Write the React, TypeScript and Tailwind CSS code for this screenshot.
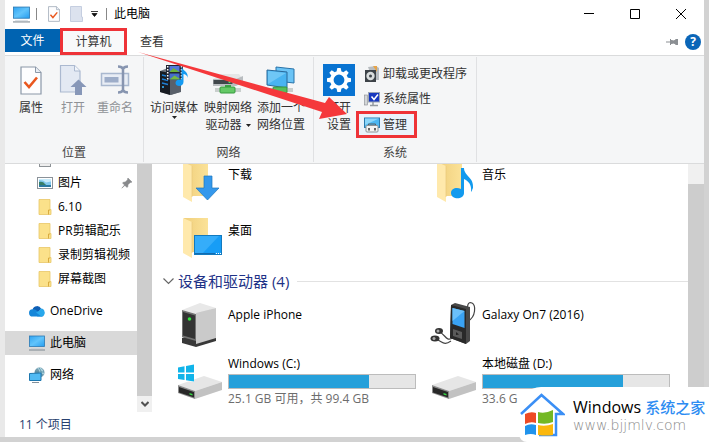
import type { ReactNode } from "react"

const pageFont = "font-['Open_Sans','Noto_Sans_CJK_SC',sans-serif]"

function MonitorIcon({ className = "w-4 h-4" }: { className?: string }) {
  return (
    <svg viewBox="0 0 16 16" className={className} aria-hidden="true">
      <defs>
        <linearGradient id="screen" x1="0" y1="0" x2="1" y2="1">
          <stop offset="0" stopColor="#2ea3f2" />
          <stop offset="0.5" stopColor="#62c4fb" />
          <stop offset="1" stopColor="#259df0" />
        </linearGradient>
      </defs>
      <rect x="0.5" y="1" width="15" height="10.5" fill="url(#screen)" stroke="#2b79b4" strokeWidth="0.8" />
      <path d="M0 15h16" stroke="#7c8790" strokeWidth="1" />
      <path d="M2 13.6h12" stroke="#c3cdd5" strokeWidth="0.6" />
    </svg>
  )
}

function CheckDocIcon({ className }: { className: string }) {
  return (
    <svg viewBox="0 0 22 29" className={className} aria-hidden="true">
      <path d="M1 1h14.5L21 6.5V28H1z" fill="#fdfdfe" stroke="#8b98a8" strokeWidth="1.2" />
      <path d="M15.5 1v5.5H21" fill="#e9eef5" stroke="#8b98a8" strokeWidth="1" />
      <path d="M4.500 16l4.500 5 8-9.500" fill="none" stroke="#e9571f" strokeWidth="2.6" />
    </svg>
  )
}

function OpenIcon() {
  return (
    <svg viewBox="0 0 28 32" className="w-7 h-8" aria-hidden="true">
      <path d="M1.500 1.500h14L21 7v21H1.500z" fill="#e3e9f3" stroke="#abb9d0" strokeWidth="1.2" />
      <path d="M15.500 1.500V7H21" fill="#f2f5fa" stroke="#abb9d0" />
      <path d="M19.500 15.500l8 7.500h-4.500v8h-7v-8h-4.500z" fill="#8797b8" />
    </svg>
  )
}

function RenameIcon() {
  return (
    <svg viewBox="0 0 30 32" className="w-[30px] h-8" aria-hidden="true">
      <rect x="1.5" y="9.5" width="27" height="12" fill="#e8edf5" stroke="#a9b8cf" strokeWidth="1.5" />
      <rect x="4.5" y="13" width="14" height="5.5" fill="#9dadc9" />
      <path d="M18 2.500q4 0 5 2.500q1-2.500 5-2.500M23 4.500v22M18 28.500q4 0 5-2.500q1 2.500 5 2.500" fill="none" stroke="#8795b0" strokeWidth="2.5" />
    </svg>
  )
}

function MediaServerIcon() {
  return (
    <svg viewBox="0 0 32 32" className="w-8 h-8" aria-hidden="true">
      <path d="M2 7l8-3 12 3v21l-9 3-11-3z" fill="#717780" />
      <path d="M2 7l10 2v22l-10-3z" fill="#181c22" />
      <path d="M12 9l11-3v22l-11 3z" fill="#59606a" />
      <path d="M4 11l6 1.500M4 15l6 1.500M4 19l6 1.500" stroke="#1f7fd3" strokeWidth="1.5" />
      <circle cx="5" cy="23" r="1" fill="#38b8ff" />
      <rect x="8" y="1" width="17" height="15" fill="#202531" />
      <rect x="11.5" y="2" width="10" height="6" fill="#5277dc" />
      <path d="M11.500 8l4-4 6 4z" fill="#6cb23a" />
      <rect x="11.5" y="9.5" width="10" height="6" fill="#466dca" />
      <path d="M11.500 15.500l5-4 5 3v1z" fill="#75b943" />
      <path d="M9.700 2v14M23.500 2v14" stroke="#fff" strokeWidth="1.5" strokeDasharray="1.5 1.5" />
      <path d="M23.500 2c.5 5 7.500 5 6 12c0-3-3-4-4-4v8c0 5-8 5-8 1c0-3 3-4 6-3.500z" fill="#159af1" />
    </svg>
  )
}

function MapDriveIcon() {
  return (
    <svg viewBox="0 0 32 32" className="w-8 h-8" aria-hidden="true">
      <path d="M1 15l8-5h18l4 5v6H1z" fill="#e4e6e7" />
      <path d="M1 15h23l7-3v6l-7 4H1z" fill="#b9bdc0" />
      <rect x="1.5" y="16" width="19" height="4" fill="#40474b" />
      <circle cx="17.5" cy="18" r="1.1" fill="#3bff66" />
      <path d="M13 21h6v5h-6z" fill="#3ba646" />
      <rect x="3" y="24" width="26" height="4" fill="#c9cfcd" />
      <rect x="8" y="23" width="15" height="6" rx="1" fill="#64c966" stroke="#37993f" />
    </svg>
  )
}

function AddPlaceIcon() {
  return (
    <svg viewBox="0 0 32 32" className="w-8 h-8" aria-hidden="true">
      <path d="M11 3l18 2v14l-18-2z" fill="#6bc4f6" stroke="#2973a9" />
      <path d="M2 6l20 2v16L2 21z" fill="#48b4f1" stroke="#2a6898" />
      <path d="M3 7l18 2-18 11z" fill="#8bd3fa" opacity="0.6" />
      <path d="M4 26h24" stroke="#c9cfcd" strokeWidth="4" />
      <rect x="8" y="23" width="14" height="6" rx="1" fill="#55be5b" stroke="#37943e" />
    </svg>
  )
}

function GearTile() {
  const teeth = [0, 45, 90, 135, 180, 225, 270, 315]
  return (
    <svg viewBox="0 0 32 32" className="w-8 h-8" aria-hidden="true">
      <rect width="32" height="32" fill="#0873d1" />
      <circle cx="16" cy="16" r="7.2" fill="none" stroke="#fff" strokeWidth="3.6" />
      {teeth.map((angle) => (
        <path key={angle} d="M13.500 8l.8-4h3.400l.8 4z" fill="#fff" transform={`rotate(${angle} 16 16)`} />
      ))}
    </svg>
  )
}

function UninstallIcon() {
  return (
    <svg viewBox="0 0 16 16" className="w-4 h-4" aria-hidden="true">
      <path d="M4 1l8-1 3 2v12H9z" fill="#b7bcc0" />
      <path d="M9 0h4v6z" fill="#e6a449" />
      <rect x="1" y="4" width="11" height="12" fill="#3d4348" />
      <circle cx="6.5" cy="10" r="4.2" fill="#d9dddd" />
      <circle cx="6.5" cy="10" r="1.5" fill="#3d4348" />
    </svg>
  )
}

function SystemIcon() {
  return (
    <svg viewBox="0 0 16 16" className="w-4 h-4" aria-hidden="true">
      <rect x="0.5" y="4" width="3" height="10" fill="#d3d6d8" stroke="#878b91" strokeWidth="0.6" />
      <rect x="4.5" y="1.5" width="11" height="9.5" fill="#1838bf" stroke="#9ba5b5" />
      <path d="M7.500 5.500l2.500 3 4-5" fill="none" stroke="#fff" strokeWidth="1.5" />
      <path d="M9 11v3M6 14.500h8" stroke="#949a9f" strokeWidth="1.5" />
    </svg>
  )
}

function ManageIcon() {
  return (
    <svg viewBox="0 0 16 16" className="w-4 h-4" aria-hidden="true">
      <rect x="0.5" y="1" width="15" height="9.5" fill="#4cb7f3" stroke="#2a7aad" />
      <path d="M1 1.500h14L1 8z" fill="#8bd6fa" />
      <path d="M4.500 9V7h7v2" fill="none" stroke="#575e64" />
      <rect x="2" y="8.5" width="12" height="6.5" rx="1" fill="#f4f4f4" stroke="#8c9297" />
      <path d="M5 11v2.500M11 11v2.500" stroke="#333" strokeWidth="1.5" />
    </svg>
  )
}

function SmallFolder() {
  return (
    <svg viewBox="0 0 16 16" className="w-4 h-4" aria-hidden="true">
      <path d="M2 .5h11v10h1v5H2z" fill="#fbe18a" stroke="#e9c767" strokeWidth="0.8" />
      <path d="M11.500 15.500v-4.500h1.500" fill="none" stroke="#d9ab3f" />
    </svg>
  )
}

function PictureIcon() {
  return (
    <svg viewBox="0 0 16 16" className="w-4 h-4" aria-hidden="true">
      <rect x="0.5" y="2.5" width="15" height="11" fill="#fff" stroke="#8b9299" />
      <rect x="2" y="4" width="12" height="8" fill="#82c8ed" />
      <path d="M2 7q4-1 6 2t6 1v2H2z" fill="#397e68" />
      <path d="M2 5l4 .5 3 2 5-1V4H2z" fill="#c9ebfa" />
      <path d="M2 10h12v2H2z" fill="#2b79a2" />
    </svg>
  )
}

function CloudIcon() {
  return (
    <svg viewBox="0 0 16 16" className="w-4 h-4" aria-hidden="true">
      <path d="M3.500 6.500a4.700 4.700 0 0 1 8.700-.8L9 9.500z" fill="#0f5fb5" />
      <path d="M11.500 5.500a3.700 3.700 0 0 1 4 3.500q.5 4-3 4.500H8z" fill="#2aa6ea" />
      <path d="M3.500 6.200q2.500-.2 4 1.300l7 5.500q-1 .6-3 .6H4A3.700 3.700 0 0 1 3.500 6.200" fill="#1586d9" />
      <path d="M7 9.500l5-2.500 3.500 2q.2 3.500-3 4.500z" fill="#28a8ec" />
    </svg>
  )
}

function NetworkIcon() {
  return (
    <svg viewBox="0 0 16 16" className="w-4 h-4" aria-hidden="true">
      <circle cx="10.5" cy="5.5" r="5" fill="#719caf" />
      <path d="M8 1.500q3 1 2 4l5 2q0-5-4-7z" fill="#afd4df" />
      <path d="M10 1q4 4 1 9M6 5h9" fill="none" stroke="#407f9a" strokeWidth="0.7" />
      <path d="M0.500 6.500l11.500-.5v7.500H.5z" fill="#51baf3" stroke="#1d77ae" />
      <path d="M3 15.500h7" stroke="#82909b" />
    </svg>
  )
}

function LargeFolder({ children }: { children: ReactNode }) {
  return (
    <svg viewBox="0 0 48 48" className="w-12 h-12 shrink-0" aria-hidden="true">
      <defs>
        <linearGradient id="folder" x1="0" y1="0" x2="1" y2="0">
          <stop offset="0" stopColor="#f0cf7c" />
          <stop offset="1" stopColor="#fbe298" />
        </linearGradient>
      </defs>
      <path d="M8 6h24v34H8z" fill="url(#folder)" />
      <path d="M7 6l9 4v36l-9-5z" fill="#ffe9ac" />
      <path d="M16 10v31" stroke="#e8c878" strokeWidth="0.7" />
      {children}
    </svg>
  )
}

function DriveIcon({ system = false }: { system?: boolean }) {
  return (
    <svg viewBox="0 0 48 48" className="w-12 h-12 shrink-0" aria-hidden="true">
      <path d="M2 30l26-9 18 6-27 9z" fill="#e6e6e6" />
      <path d="M19 36l27-9v8l-27 9z" fill="#c2c2c2" />
      <path d="M2 30l17 6v8L2 38z" fill="#8c8c8c" />
      <path d="M3 32l15 5v5.500L3 37.500z" fill="#282828" />
      <path d="M13.500 38l3 1v1.500l-3-1z" fill="#35dd43" />
      {system && (
        <>
          <path d="M1 12l17-3v18L1 25z" fill="#fff" />
          <path d="M2 12.500l6.500-1.200v6.200H2zM10 11l8-1.500v8h-8zM2 19h6.500v6L2 24zM10 19h8v7.500l-8-1.300z" fill="#10b4ea" />
        </>
      )}
    </svg>
  )
}

function PhoneIcon() {
  return (
    <svg viewBox="0 0 48 48" className="w-12 h-12 shrink-0" aria-hidden="true">
      <path d="M6 39l15-5 19 3v5l-20 6-14-4z" fill="#383838" />
      <path d="M6 11l18-7 16 5-19 6z" fill="#e8e8e8" />
      <path d="M20 14l20-5v30l-20 6z" fill="#cacaca" />
      <path d="M6 11l14 4v27L6 38z" fill="#727272" />
      <path d="M7 13l12 3.500V40L7 36.500z" fill="#333" />
      <circle cx="13.5" cy="20" r="1.8" fill="#32e23e" />
    </svg>
  )
}

function PlayerIcon() {
  return (
    <svg viewBox="0 0 48 48" className="w-12 h-12 shrink-0" aria-hidden="true">
      <path d="M38 22c8-4 8-16 4-18s-5 3-5 9M23 39c-8 4-7-4-15-7M21 42c-7 5-8 1-15-2" fill="none" stroke="#444" strokeWidth="1.2" />
      <path d="M21 6l4-2 15 4v34l-4 3-16-6z" fill="#484848" />
      <path d="M21 6l15 4v35l-16-6z" fill="#292929" />
      <path d="M22.500 9l12 3v17l-12-4z" fill="#3aa3f4" />
      <path d="M22.500 9l12 3-12 10z" fill="#6bc0fa" />
      <path d="M23 30l9 3v7l-9-3z" fill="#5a5a5a" />
      <path d="M26 33v3l3-.5z" fill="#222" />
      <ellipse cx="9" cy="32" rx="4" ry="3" fill="#333" />
      <ellipse cx="5" cy="39.5" rx="4.5" ry="3" fill="#333" />
      <circle cx="8" cy="32" r="1.5" fill="#aaa" />
      <circle cx="4" cy="39.5" r="1.5" fill="#aaa" />
    </svg>
  )
}

function PinIcon() {
  return (
    <svg viewBox="0 0 12 12" className="w-3 h-3" aria-hidden="true">
      <path d="M7 1l4 4-1 .6-.7-.2L7 7.700l-.2 2-.8.800L3.900 8.400.8 11.200 3.500 8 1.500 6l.8-.8 2-.2L6.600 2.700 6.400 2z" fill="#87898b" stroke="#87898b" strokeWidth="0.5" />
    </svg>
  )
}

function Caret() {
  return (
    <svg viewBox="0 0 5 3" className="inline-block w-[5px] h-[3px]" aria-hidden="true">
      <path d="M0 0h5L2.500 3z" fill="#222" />
    </svg>
  )
}

function BigButton({ icon, lines, caret, disabled, width }: { icon: ReactNode; lines: string[]; caret?: "below" | "inline"; disabled?: boolean; width: string }) {
  return (
    <button disabled={disabled} className={`flex flex-col items-center pt-[7px] ${width} ${disabled ? "text-[#8f9296]" : "text-[#333]"}`}>
      <span className="flex h-8 items-center">{icon}</span>
      <span className="mt-[3px] flex flex-col whitespace-nowrap text-xs leading-[17px]">
        {lines.map((line, i) => (
          <span key={line}>
            {line}
            {caret === "inline" && i === lines.length - 1 && <span className="inline-flex pl-1 align-middle"><Caret /></span>}
          </span>
        ))}
      </span>
      {caret === "below" && <span className="flex"><Caret /></span>}
    </button>
  )
}

function Group({ label, width, children }: { label: string; width: string; children: ReactNode }) {
  return (
    <div className={`flex shrink-0 flex-col border-r border-[#e0e1e3] ${width}`}>
      <div className="flex flex-1 items-start">{children}</div>
      <div className="pb-px text-center text-xs leading-4 text-[#444]">{label}</div>
    </div>
  )
}

function Ribbon() {
  return (
    <div className="flex h-[109px] border-y border-[#dadbdc] bg-[#f5f6f7] py-px">
      <Group label="位置" width="w-[139px]">
        <BigButton icon={<CheckDocIcon className="w-[22px] h-[29px]" />} lines={["属性"]} width="w-[52px]" />
        <BigButton icon={<OpenIcon />} lines={["打开"]} disabled width="w-8" />
        <BigButton icon={<RenameIcon />} lines={["重命名"]} disabled width="w-[52px]" />
      </Group>
      <Group label="网络" width="w-[170px]">
        <BigButton icon={<MediaServerIcon />} lines={["访问媒体"]} caret="below" width="w-[60px]" />
        <BigButton icon={<MapDriveIcon />} lines={["映射网络", "驱动器"]} caret="inline" width="w-12" />
        <BigButton icon={<AddPlaceIcon />} lines={["添加一个", "网络位置"]} width="w-[58px]" />
      </Group>
      <Group label="系统" width="w-[163px]">
        <BigButton icon={<GearTile />} lines={["打开", "设置"]} width="w-[50px]" />
        <div className="flex flex-col items-start pt-1 text-xs text-[#333] -ml-2">
          <button className="flex h-[26px] items-center gap-[3px] pl-2">
            <UninstallIcon />
            卸载或更改程序
          </button>
          <button className="flex h-6 items-center gap-[3px] pl-2">
            <SystemIcon />
            系统属性
          </button>
          <button className="flex h-[27px] w-[61px] items-center gap-[3px] border-3 border-[#ee3338] bg-[#eaf2fb] pl-[5px]">
            <ManageIcon />
            管理
          </button>
        </div>
      </Group>
    </div>
  )
}

function TitleBar() {
  return (
    <header className="flex h-7 items-center">
      <div className="flex flex-1 items-center pl-2">
        <MonitorIcon className="w-[17px] h-[17px]" />
        <span className="ml-[6px] h-3 w-px bg-[#888]" />
        <button aria-label="属性" className="ml-[11px]">
          <CheckDocIcon className="w-3 h-4" />
        </button>
        <button aria-label="新建文件夹" className="ml-[10px]">
          <svg viewBox="0 0 13 16" className="w-[13px] h-4" aria-hidden="true">
            <path d="M.5.5h11V11h1v4.500H.5z" fill="#dce2ee" stroke="#c5cee0" />
          </svg>
        </button>
        <button aria-label="自定义快速访问工具栏" className="ml-2">
          <svg viewBox="0 0 7 6" className="w-[7px] h-[6px]" aria-hidden="true">
            <path d="M0 .5h7M1 2.500h5L3.500 5.500z" fill="#111" stroke="#111" strokeWidth="0.8" />
          </svg>
        </button>
        <span className="ml-2 h-3 w-px bg-[#888]" />
        <h1 className="ml-[7px] text-xs text-black">此电脑</h1>
      </div>
      <button aria-label="最小化" className="flex h-7 w-[46px] items-center justify-center">
        <svg viewBox="0 0 10 10" className="w-[10px] h-[10px]"><path d="M0 4.500h10" stroke="#000" /></svg>
      </button>
      <button aria-label="最大化" className="flex h-7 w-[46px] items-center justify-center">
        <svg viewBox="0 0 10 10" className="w-[10px] h-[10px]"><path d="M.5.5h9v9h-9z" fill="none" stroke="#000" /></svg>
      </button>
      <button aria-label="关闭" className="flex h-7 w-[46px] items-center justify-center">
        <svg viewBox="0 0 10 10" className="w-[10px] h-[10px]"><path d="M0 0l10 10M10 0L0 10" stroke="#000" /></svg>
      </button>
    </header>
  )
}

function Tabs() {
  return (
    <nav className="flex h-[27px] items-center text-xs">
      <button className="mb-[2px] h-[23px] w-[55px] bg-[#0063b1] text-white">文件</button>
      <button className="h-[27px] w-[67px] border-3 border-[#ee3338] bg-[#f8f9fa] text-[#333]">计算机</button>
      <button className="w-[50px] text-[#333]">查看</button>
      <div className="ml-auto flex items-center gap-[7px] pr-[3px]">
        <svg viewBox="0 0 12 8" className="w-3 h-2" aria-hidden="true">
          <path d="M0 4h5M4.500 1v6M5 2.500l3 .5 2-1.500h2v5h-2L8 5l-3 .5z" fill="#8b8f93" stroke="#8b8f93" />
        </svg>
        <button aria-label="帮助" className="h-4 w-4 rounded-full bg-[#0b66b8] text-xs leading-4 font-bold text-white">?</button>
      </div>
    </nav>
  )
}

const quickFolders = ["6.10", "PR剪辑配乐", "录制剪辑视频", "屏幕截图"]

function Sidebar() {
  return (
    <aside className="w-[132px] shrink-0 text-xs whitespace-nowrap text-black">
      <div className="flex h-[7px] items-start pl-[34px]">
        <span className="h-[3px] w-3 border border-t-0 border-[#8d9296] bg-[#eee]" />
      </div>
      <a href="#pictures" className="flex h-6 items-center gap-[5px] pl-8">
        <PictureIcon />
        图片
        <span className="mr-1 ml-auto"><PinIcon /></span>
      </a>
      {quickFolders.map((name) => (
        <a key={name} href="#folder" className="flex h-6 items-center gap-[5px] pl-8">
          <SmallFolder />
          {name}
        </a>
      ))}
      <div className="flex flex-col gap-2 pt-2">
        <a href="#onedrive" className="flex h-6 items-center gap-[5px] pl-6"><CloudIcon />OneDrive</a>
        <a href="#pc" className="flex h-6 items-center gap-[5px] bg-[#d9d9d9] pl-6"><MonitorIcon />此电脑</a>
        <a href="#network" className="flex h-6 items-center gap-[5px] pl-6"><NetworkIcon />网络</a>
      </div>
    </aside>
  )
}

function Drive({ icon, name, info, used }: { icon: ReactNode; name: string; info: string; used: number }) {
  return (
    <div className="flex items-start gap-1">
      {icon}
      <div className="w-[188px]">
        <div className="leading-[18px]">{name}</div>
        <div role="meter" aria-label={name} aria-valuenow={used} aria-valuemin={0} aria-valuemax={100} className="mt-px h-[15px] border border-[#bcbcbc] bg-[#e6e6e6]">
          <div className="h-full bg-[#26a0da]" style={{ width: `${used}%` }} />
        </div>
        <div className="mt-px leading-[18px] text-[#6d6d6d]">{info}</div>
      </div>
    </div>
  )
}

function Files() {
  return (
    <main className="min-w-0 flex-1 overflow-hidden text-xs whitespace-nowrap text-black">
      <div className="-mt-2 grid grid-cols-[254px_254px] gap-y-2 pl-6">
        <div className="flex gap-1">
          <LargeFolder>
            <path d="M28 20h8v12h7L31.500 44 20 32h8z" fill="#3498ec" stroke="#1e75bd" strokeWidth="0.7" />
          </LargeFolder>
          <span className="pt-[10px] leading-[18px]">下载</span>
        </div>
        <div className="flex gap-1">
          <LargeFolder>
            <path d="M31 12h3c0 8 10 9 9 20c-1 2-1 3-2 4c1-8-3-11-7-13v14c0 7-13 7-13 0c0-5 6-6 10-4z" fill="#129aee" />
          </LargeFolder>
          <span className="pt-[10px] leading-[18px]">音乐</span>
        </div>
        <div className="flex gap-1">
          <LargeFolder>
            <rect x="18.5" y="23.5" width="27" height="19" fill="#179df6" stroke="#127abf" />
            <path d="M19 24h24L26 42h-7z" fill="#35adfa" />
            <path d="M19 41.500h20" stroke="#116bb0" />
            <path d="M40 41.500h5" stroke="#fff" strokeDasharray="1 1" />
          </LargeFolder>
          <span className="pt-[10px] leading-[18px]">桌面</span>
        </div>
      </div>
      <h2 className="mt-[9px] flex h-6 items-center gap-1 pl-[11px] text-[15px] leading-6 text-[#1e3287]">
        <svg viewBox="0 0 11 8" className="w-[11px] h-2" aria-hidden="true">
          <path d="M.5 1.500l5 5 5-5" fill="none" stroke="#666" strokeWidth="1.2" />
        </svg>
        <span>设备和驱动器 (4)</span>
        <span className="ml-1 h-px flex-1 bg-[#e2e2e2]" />
      </h2>
      <div className="grid grid-cols-[254px_254px] gap-y-2 pt-[6px] pl-6">
        <div className="flex gap-1">
          <PhoneIcon />
          <span className="pt-[7px] leading-[18px]">Apple iPhone</span>
        </div>
        <div className="flex gap-1">
          <PlayerIcon />
          <span className="pt-[7px] leading-[18px]">Galaxy On7 (2016)</span>
        </div>
        <Drive icon={<DriveIcon system />} name="Windows (C:)" info="25.1 GB 可用，共 99.4 GB" used={75} />
        <Drive icon={<DriveIcon />} name="本地磁盘 (D:)" info="33.6 G" used={75} />
      </div>
    </main>
  )
}

function SiteBadge() {
  return (
    <div className="absolute right-0 bottom-0 flex h-[55px] w-[190px] items-center gap-2 rounded-tl-[22px] rounded-bl-lg bg-white">
      <svg viewBox="0 0 46 46" className="w-[46px] h-[46px] shrink-0" aria-hidden="true">
        <path d="M2 22L22.500 3 44 22h-7v21H20" fill="none" stroke="#3b8ff5" strokeWidth="2.5" />
        <path d="M6 22q6-3 11-1v10q-5-2-11 1z" fill="#ed4a24" />
        <path d="M19 20q7 2 15-2v12q-7 3-15 1z" fill="#74b824" />
        <path d="M6 34q5-3 11-1v10q-5-2-11 0z" fill="#2093ec" />
        <path d="M19 33q7 2 15-1v11q-7 1-15 0z" fill="#fbb80d" />
      </svg>
      <div className="whitespace-nowrap">
        <div className="text-base leading-5 font-medium text-black">
          Windows <span className="text-[15px] text-[#2d8cf2]">系统之家</span>
        </div>
        <div className="font-['DejaVu_Sans',sans-serif] text-sm leading-4 font-extralight text-[#888]">www.bjjmlv.com</div>
      </div>
    </div>
  )
}

export default function App() {
  return (
    <div className={`relative flex min-h-screen flex-col overflow-hidden bg-[#d2d2d2] pb-[5px] ${pageFont}`}>
      <div className="relative mr-[5px] flex flex-1 flex-col border-l-5 border-[#e9e9e9] bg-white">
        <TitleBar />
        <Tabs />
        <Ribbon />
        <div className="flex flex-1">
          <div className="flex flex-col">
            <div className="flex flex-1">
              <Sidebar />
              <div className="flex w-[15px] flex-col bg-[#cdcdcd]">
                <button aria-label="向下滚动" className="mt-auto flex h-4 items-center justify-center bg-[#f0f0f0]">
                  <svg viewBox="0 0 8 6" className="w-2 h-[6px]"><path d="M.5 1L4 4.500 7.500 1" fill="none" stroke="#505050" strokeWidth="2" /></svg>
                </button>
              </div>
            </div>
            <footer className="flex h-[25px] items-center pl-[14px] text-xs text-[#28406e]">11 个项目</footer>
          </div>
          <Files />
          <div className="w-4 shrink-0 border-t-[20px] border-[#f0f0f0] bg-[#cdcdcd]" />
        </div>
        {/* arrow from the open tab down to the manage command */}
        <svg viewBox="0 0 215 80" className="pointer-events-none absolute top-[48px] left-[132px] w-[215px] h-20" aria-hidden="true">
          <path d="M1 4L188 55l4-6 18 17-28 5 3-7z" fill="#f5383b" />
        </svg>
      </div>
      <SiteBadge />
    </div>
  )
}
